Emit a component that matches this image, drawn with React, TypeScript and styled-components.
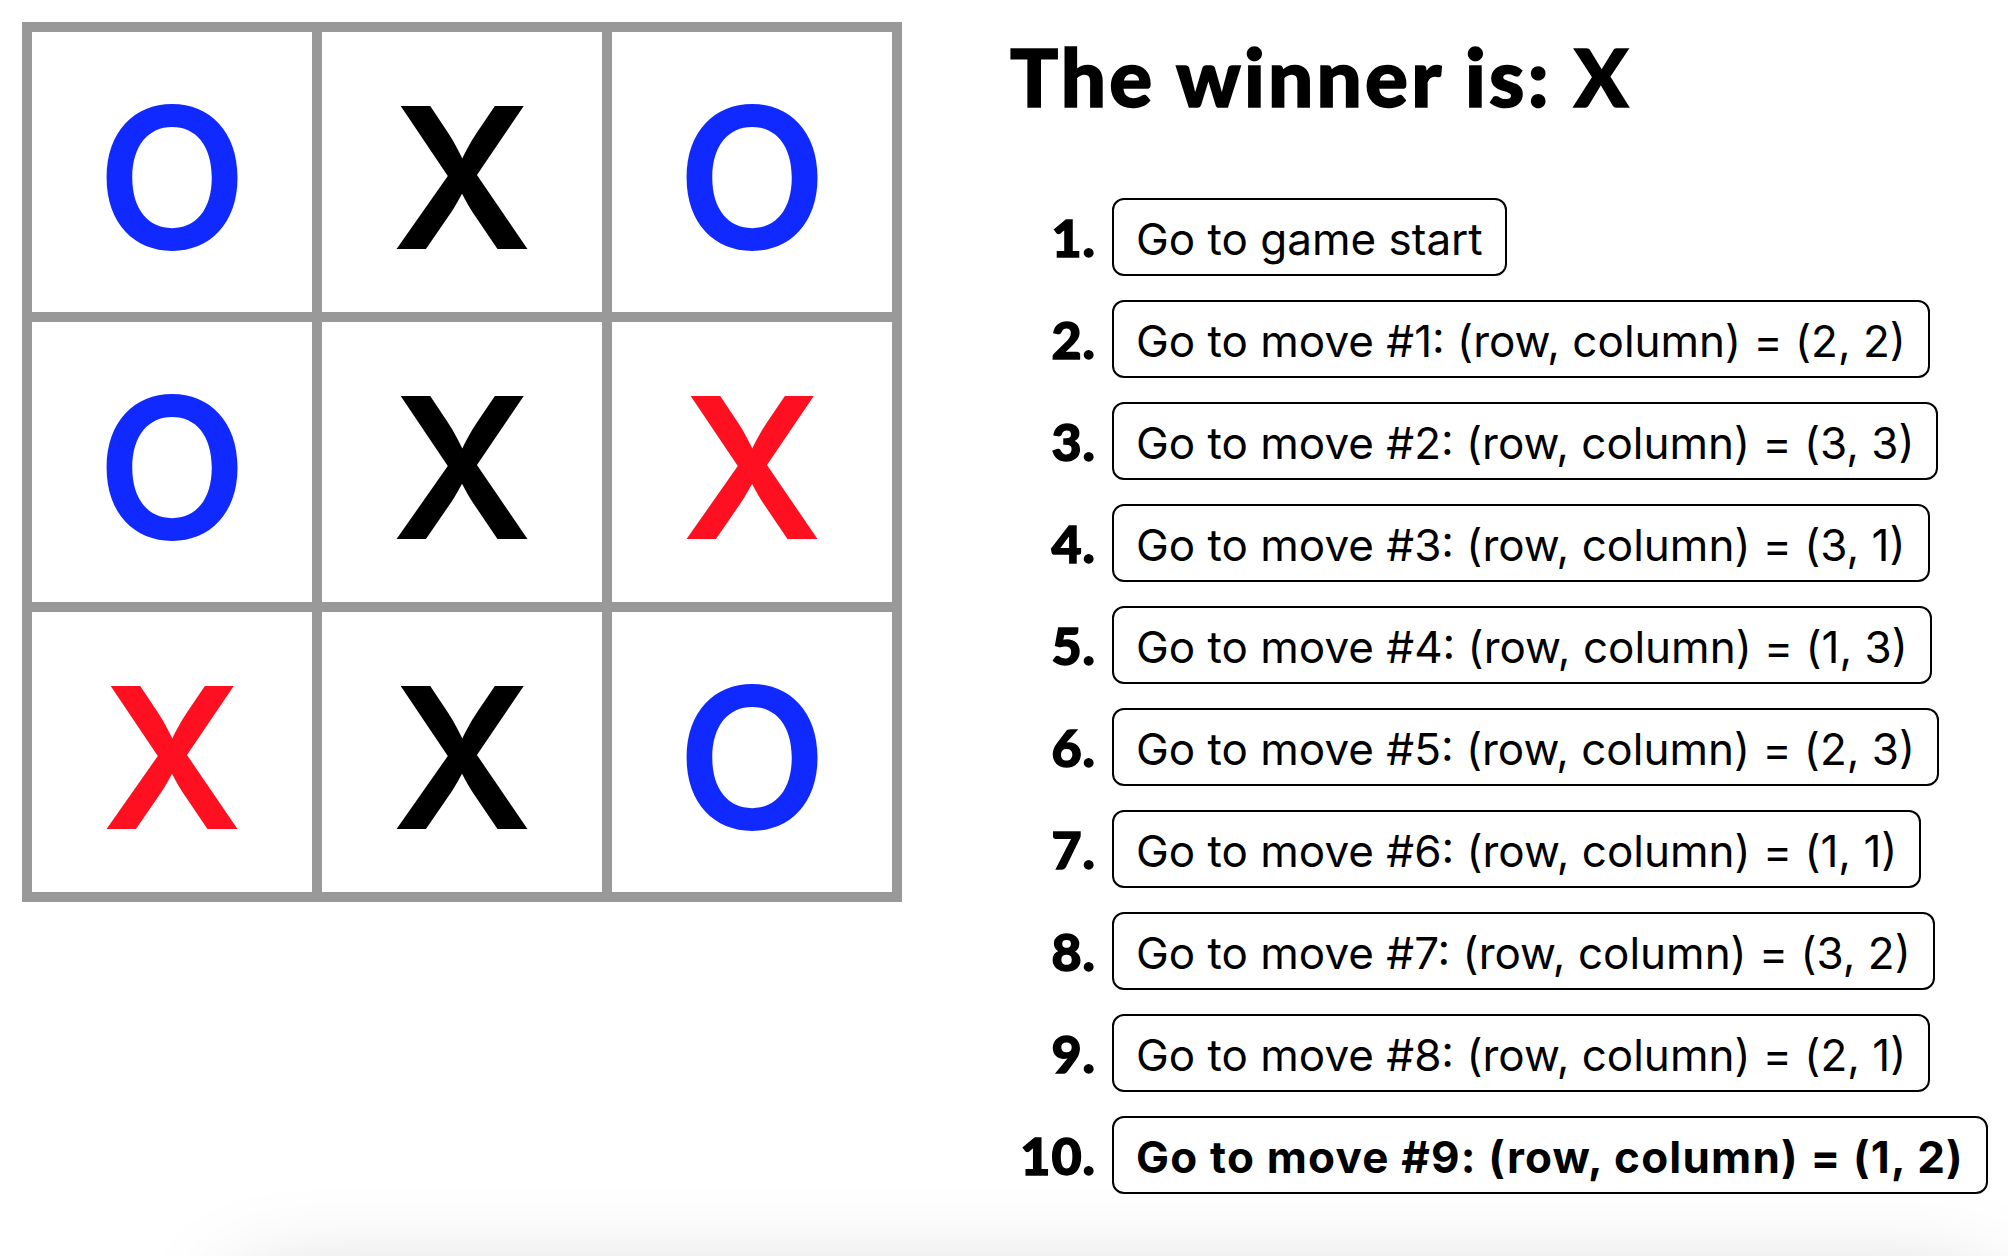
import React from "react";
import styled, { createGlobalStyle } from "styled-components";

const GlobalStyle = createGlobalStyle`
  html, body {
    overflow: hidden;
  }
  body {
    margin: 8px;
    background: #ffffff;
    font-family: Inter, "Liberation Sans", sans-serif;
    color: #000000;
  }
`;

const Page = styled.div`
  display: flex;
  flex-direction: column;
  padding: 14px;
`;

const Game = styled.div`
  display: flex;
  align-items: flex-start;
  gap: 108px;
`;

const Board = styled.div`
  display: grid;
  grid-template-columns: repeat(3, 280px);
  grid-auto-rows: 280px;
  gap: 10px;
  padding: 10px;
  background: #999999;
`;

const Square = styled.button<{ $tone: string }>`
  display: flex;
  align-items: center;
  justify-content: center;
  margin: 0;
  border: none;
  background: #ffffff;
  font-family: Inter, "Liberation Sans", sans-serif;
  font-weight: 600;
  font-size: 196px;
  line-height: 1;
  color: ${(p) => p.$tone};
  padding: 12px 0 0 0;
`;

const Info = styled.div`
  display: flex;
  flex-direction: column;
`;

const Status = styled.h1`
  margin: 14px 0 0 0;
  font-family: Lato, "DejaVu Sans", sans-serif;
  font-weight: 900;
  font-size: 80px;
  line-height: 80px;
  height: 80px;
  letter-spacing: 3.2px;
  -webkit-text-stroke: 1.6px #000000;
`;

const MoveList = styled.ol`
  list-style: none;
  margin: 82px 0 0 0;
  padding: 0;
  display: flex;
  flex-direction: column;
  gap: 24px;
`;

const MoveItem = styled.li`
  display: flex;
  align-items: center;
  gap: 16px;
`;

const Num = styled.span`
  width: 86px;
  text-align: right;
  font-family: Lato, "DejaVu Sans", sans-serif;
  font-weight: 900;
  font-size: 52px;
  line-height: 1;
  letter-spacing: 1px;
  -webkit-text-stroke: 1.4px #000000;
`;

const MoveButton = styled.button<{ $current?: boolean }>`
  box-sizing: border-box;
  height: 78px;
  padding: 3px 22px 0 22px;
  border: 2px solid #000000;
  border-radius: 12px;
  background: #ffffff;
  color: #000000;
  font-family: Inter, "Liberation Sans", sans-serif;
  font-size: 44px;
  font-weight: ${(p) => (p.$current ? 700 : 400)};
  letter-spacing: ${(p) => (p.$current ? "1.2px" : "0px")};
  line-height: 1;
  white-space: nowrap;
`;

const ShadowCard = styled.div`
  margin: 100px 0 0 218px;
  height: 400px;
  border-radius: 24px;
  background: #ffffff;
  box-shadow: 0 0 100px rgba(0, 0, 0, 0.26);
`;

const BLUE = "#1029ff";
const RED = "#ff1020";
const BLACK = "#000000";

const squares: { v: string; c: string }[] = [
  { v: "O", c: BLUE },
  { v: "X", c: BLACK },
  { v: "O", c: BLUE },
  { v: "O", c: BLUE },
  { v: "X", c: BLACK },
  { v: "X", c: RED },
  { v: "X", c: RED },
  { v: "X", c: BLACK },
  { v: "O", c: BLUE },
];

const moves: [number, number][] = [
  [2, 2],
  [3, 3],
  [3, 1],
  [1, 3],
  [2, 3],
  [1, 1],
  [3, 2],
  [2, 1],
  [1, 2],
];

export default function App() {
  const labels = [
    "Go to game start",
    ...moves.map(
      ([r, c], i) => `Go to move #${i + 1}: (row, column) = (${r}, ${c})`
    ),
  ];
  return (
    <>
      <GlobalStyle />
      <Page>
        <Game>
          <Board>
            {squares.map((s, i) => (
              <Square key={i} $tone={s.c}>
                {s.v}
              </Square>
            ))}
          </Board>
          <Info>
            <Status>The winner is: X</Status>
            <MoveList>
              {labels.map((label, i) => (
                <MoveItem key={i}>
                  <Num>{i + 1}.</Num>
                  <MoveButton $current={i === labels.length - 1}>
                    {label}
                  </MoveButton>
                </MoveItem>
              ))}
            </MoveList>
          </Info>
        </Game>
        <ShadowCard />
      </Page>
    </>
  );
}
